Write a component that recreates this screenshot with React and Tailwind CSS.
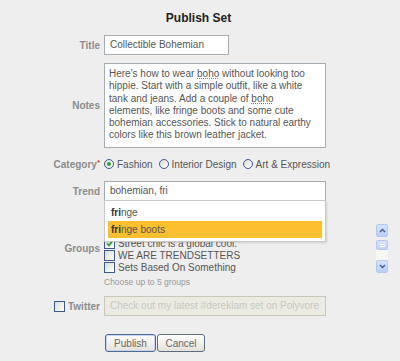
import React from "react";

function Row({ label, children, className = "" }) {
  return (
    <div className={"flex items-center " + className}>
      <div className="w-[101px] pr-[1px] text-right font-bold text-[#8c8c8c]">{label}</div>
      <div className="ml-[3px]">{children}</div>
    </div>
  );
}

function Radio({ checked, label }) {
  return (
    <label className="flex items-center gap-[3px] mr-[6px]">
      <span className="w-[10px] h-[10px] rounded-full border border-[#3b5b8c] bg-linear-to-br from-[#dcdcd6] to-white flex items-center justify-center">
        {checked && <span className="w-[4px] h-[4px] rounded-full bg-[#2fa82f]" />}
      </span>
      <span className="text-[#555]">{label}</span>
    </label>
  );
}

function Check({ checked }) {
  return (
    <span className="w-[11px] h-[11px] border border-[#3b5b8c] bg-linear-to-br from-[#dcdcd6] to-white flex items-center justify-center shrink-0">
      {checked && (
        <svg width="7" height="7" viewBox="0 0 7 7">
          <path d="M1 3.5 L3 5.5 L6 1.5" stroke="#21a121" strokeWidth="1.6" fill="none" />
        </svg>
      )}
    </span>
  );
}

function ScrollBtn({ up }) {
  return (
    <div className="h-[13px] w-[12px] rounded-[2px] border border-[#b4c8f2] bg-linear-to-b from-[#d8e4fd] to-[#b9cdf8] flex items-center justify-center">
      <svg width="7" height="5" viewBox="0 0 7 5">
        <path d={up ? "M1 4 L3.5 1.5 L6 4" : "M1 1 L3.5 3.5 L6 1"} stroke="#4d6185" strokeWidth="1.5" fill="none" />
      </svg>
    </div>
  );
}

// red spell-check squiggle
function Misspelled({ children }) {
  return <span className="underline decoration-dotted decoration-[#e05050] decoration-[1px] underline-offset-[1px]">{children}</span>;
}

export default function App() {
  const groups = ["Boho Lovers", "Street chic is a global cool.", "WE ARE TRENDSETTERS", "Sets Based On Something"];

  return (
    <div className="w-[400px] h-[361px] overflow-hidden bg-[#eeeeee] font-['Liberation_Sans',Arial,sans-serif] text-[10px] text-[#555]">
      <h1 className="pt-[10px] pr-[3px] text-center text-[12px] leading-[16px] font-bold text-[#222]">Publish Set</h1>

      <Row label="Title" className="mt-[9px]">
        <div className="h-[20px] w-[125px] border border-[#a5acb2] bg-white px-[5px] leading-[18px]">Collectible Bohemian</div>
      </Row>

      <Row label="Notes" className="mt-[8px]">
        <div className="h-[85px] w-[222px] border border-[#a5acb2] bg-white px-[4px] pt-[4px] leading-[12.3px] whitespace-nowrap">
          Here's how to wear <Misspelled>boho</Misspelled> without looking too<br />
          hippie. Start with a simple outfit, like a white<br />
          tank and jeans. Add a couple of <Misspelled>boho</Misspelled><br />
          elements, like fringe boots and some cute<br />
          bohemian accessories. Stick to natural earthy<br />
          colors like this brown leather jacket.
        </div>
      </Row>

      <Row
        label={
          <>
            Category<span className="text-[#d33] align-top text-[8px]">*</span>
          </>
        }
        className="mt-[8px] h-[16px]"
      >
        <div className="flex items-center">
          <Radio checked label="Fashion" />
          <Radio label="Interior Design" />
          <Radio label="Art & Expression" />
        </div>
      </Row>

      <Row label="Trend" className="mt-[9px] relative z-10">
        <div className="relative">
          <div className="h-[20px] w-[222px] border border-[#a5acb2] bg-white px-[5px] leading-[18px]">bohemian, fri</div>
          <div className="absolute top-[19px] left-0 w-[222px] h-[42px] border border-[#c8c8c8] bg-white p-[3px] shadow-[1px_1px_2px_rgba(0,0,0,0.12)]">
            <div className="h-[17px] px-[3px] leading-[17px]">
              <b className="text-[#333]">fri</b>nge
            </div>
            <div className="h-[17px] px-[3px] leading-[17px] bg-[#fcc02e]">
              <b className="text-[#333]">fri</b>nge boots
            </div>
          </div>
        </div>
      </Row>

      <Row label="Groups" className="mt-[23px]">
        <div className="flex h-[49px] w-[284px]">
          <div className="flex-1 overflow-hidden pt-[1px]">
            {groups.map((g, i) => (
              <div key={g} className={"h-[12px] flex items-center gap-[3px] text-[#555] " + (i === 0 ? "invisible" : "")}>
                <Check checked={i < 2} />
                <span>{g}</span>
              </div>
            ))}
          </div>
          <div className="w-[12px] flex flex-col">
            <ScrollBtn up />
            <div className="mt-[3px] h-[10px] rounded-[2px] border border-[#b4c8f2] bg-linear-to-b from-[#d8e4fd] to-[#c2d4fb] flex flex-col items-center justify-center gap-[1px]">
              <span className="w-[5px] h-[1px] bg-white" />
              <span className="w-[5px] h-[1px] bg-white" />
            </div>
            <div className="h-[10px] bg-[#f8f8f3]" />
            <ScrollBtn />
          </div>
        </div>
      </Row>

      <div className="mt-[3px] pl-[104px] text-[8.5px] leading-[12px] text-[#9a9a9a]">Choose up to 5 groups</div>

      <div className="mt-[8px] flex items-center">
        <div className="w-[101px] pr-[1px] flex items-center justify-end gap-[3px] font-bold text-[#8c8c8c]">
          <span className="w-[11px] h-[11px] border border-[#3b5b8c] bg-linear-to-br from-[#dcdcd6] to-white" />
          <span>Twitter</span>
        </div>
        <div className="ml-[3px] h-[20px] w-[222px] border border-[#c9c7ba] bg-[#ebebe4] px-[5px] leading-[18px] text-[#c8c8c2] whitespace-nowrap overflow-hidden">
          Check out my latest #dereklam set on Polyvore
        </div>
      </div>

      <div className="mt-[18px] pl-[105px] flex gap-[1px]">
        <button className="h-[18px] w-[51px] rounded-[3px] border border-[#4f6a91] bg-linear-to-b from-white to-[#e4e2d8] text-[10px] text-[#666] shadow-[inset_0_0_0_1px_#c6d6f2]">
          Publish
        </button>
        <button className="h-[18px] w-[48px] rounded-[3px] border border-[#5e6c82] bg-linear-to-b from-white to-[#e4e2d8] text-[10px] text-[#666]">
          Cancel
        </button>
      </div>
    </div>
  );
}
